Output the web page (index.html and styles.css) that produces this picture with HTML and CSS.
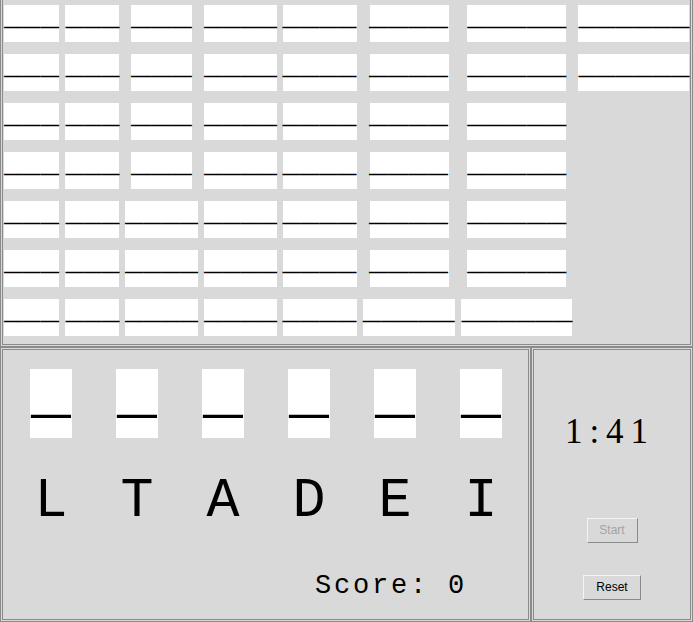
FILE: index.html
```html
<!DOCTYPE html>
<html>
<head>
<meta charset="utf-8">
<title>Word Game</title>
<link rel="stylesheet" href="styles.css">
</head>
<body>
<div class="board">
  <div class="col">
    <div class="box w55"><span>___</span></div><div class="box w55"><span>___</span></div><div class="box w55"><span>___</span></div><div class="box w55"><span>___</span></div><div class="box w55"><span>___</span></div><div class="box w55"><span>___</span></div><div class="box w55"><span>___</span></div>
  </div>
  <div class="col">
    <div class="box w54"><span>___</span></div><div class="box w54"><span>___</span></div><div class="box w54"><span>___</span></div><div class="box w54"><span>___</span></div><div class="box w54"><span>___</span></div><div class="box w54"><span>___</span></div><div class="box w54"><span>___</span></div>
  </div>
  <div class="col">
    <div class="box w61"><span>___</span></div><div class="box w61"><span>___</span></div><div class="box w61"><span>___</span></div><div class="box w61"><span>___</span></div><div class="box w73"><span>____</span></div><div class="box w73"><span>____</span></div><div class="box w73"><span>____</span></div>
  </div>
  <div class="col">
    <div class="box w73"><span>____</span></div><div class="box w73"><span>____</span></div><div class="box w73"><span>____</span></div><div class="box w73"><span>____</span></div><div class="box w73"><span>____</span></div><div class="box w73"><span>____</span></div><div class="box w73"><span>____</span></div>
  </div>
  <div class="col">
    <div class="box w74"><span>____</span></div><div class="box w74"><span>____</span></div><div class="box w74"><span>____</span></div><div class="box w74"><span>____</span></div><div class="box w74"><span>____</span></div><div class="box w74"><span>____</span></div><div class="box w74"><span>____</span></div>
  </div>
  <div class="col">
    <div class="box w79"><span>____</span></div><div class="box w79"><span>____</span></div><div class="box w79"><span>____</span></div><div class="box w79"><span>____</span></div><div class="box w79"><span>____</span></div><div class="box w79"><span>____</span></div><div class="box w92"><span>_____</span></div>
  </div>
  <div class="col">
    <div class="box w99"><span>_____</span></div><div class="box w99"><span>_____</span></div><div class="box w99"><span>_____</span></div><div class="box w99"><span>_____</span></div><div class="box w99"><span>_____</span></div><div class="box w99"><span>_____</span></div><div class="box w111"><span>______</span></div>
  </div>
  <div class="col">
    <div class="box w111"><span>______</span></div><div class="box w111"><span>______</span></div>
  </div>
</div>
<div class="bottom">
  <div class="play">
    <div class="slots">
      <div class="slot">_</div><div class="slot">_</div><div class="slot">_</div><div class="slot">_</div><div class="slot">_</div><div class="slot">_</div>
    </div>
    <div class="letters">
      <div class="letter">L</div><div class="letter">T</div><div class="letter">A</div><div class="letter">D</div><div class="letter">E</div><div class="letter">I</div>
    </div>
    <div class="score">Score: 0</div>
  </div>
  <div class="side">
    <div class="timer">1:41</div>
    <button class="btn start" disabled>Start</button>
    <button class="btn reset">Reset</button>
  </div>
</div>
</body>
</html>
```
FILE: styles.css
```css
* { box-sizing: border-box; }
html, body { margin: 0; padding: 0; }
body {
  background: #d9d9d9;
  width: 693px;
  height: 622px;
  overflow: hidden;
  font-family: "Liberation Sans", Arial, sans-serif;
}
.board {
  display: flex;
  align-items: flex-start;
  gap: 6px;
  height: 347px;
  padding: 5px 0 0 1px;
  border: 3px double #8a8a8a;
  border-top: 0;
}
.col {
  display: flex;
  flex-direction: column;
  align-items: center;
  gap: 12px;
}
.box {
  height: 37px;
  background: #fff;
  display: flex;
  justify-content: center;
  white-space: nowrap;
  font-family: "Liberation Mono", monospace;
  font-size: 30.5px;
  line-height: 24.5px;
  color: #000;
}
.box span { display: inline-block; }
.w54 { width: 54px; }
.w54 span { transform: scaleX(0.984); }
.w55 { width: 55px; }
.w61 { width: 61px; }
.w61 span { transform: scaleX(1.111); }
.w73 { width: 73px; }
.w74 { width: 74px; }
.w74 span { transform: scaleX(1.011); }
.w79 { width: 79px; }
.w79 span { transform: scaleX(1.079); }
.w92 { width: 92px; }
.w92 span { transform: scaleX(1.005); }
.w99 { width: 99px; }
.w99 span { transform: scaleX(1.082); }
.w111 { width: 111px; }
.w111 span { transform: scaleX(1.011); }

.bottom {
  display: flex;
  height: 275px;
}
.play {
  width: 531px;
  border: 3px double #8a8a8a;
  padding: 19px 0 0 27px;
}
.slots, .letters {
  display: grid;
  grid-template-columns: repeat(6, 42px);
  column-gap: 44px;
}
.slot {
  height: 69px;
  background: #fff;
  display: flex;
  justify-content: center;
  font-family: "Liberation Mono", monospace;
  font-size: 66.5px;
  line-height: 49px;
  color: #000;
}
.letters { margin-top: 34px; }
.letter {
  justify-self: center;
  font-family: "Liberation Mono", monospace;
  font-size: 55px;
  line-height: 60px;
  color: #000;
}
.score {
  margin-top: 39px;
  padding-left: 285px;
  font-family: "Liberation Mono", monospace;
  font-size: 27px;
  line-height: 30px;
  letter-spacing: 2.8px;
  color: #000;
}
.side {
  width: 162px;
  border: 3px double #8a8a8a;
  display: flex;
  flex-direction: column;
  align-items: center;
  padding-top: 62px;
}
.timer {
  font-family: "Liberation Serif", "Times New Roman", serif;
  font-size: 35px;
  line-height: 40px;
  letter-spacing: 7px;
  padding-right: 4px;
  color: #000;
}
.btn {
  height: 25px;
  padding: 0;
  background: #d9d9d9;
  border: 1px solid;
  border-color: #f4f4f4 #8a8a8a #8a8a8a #f4f4f4;
  font-family: "Liberation Sans", Arial, sans-serif;
  font-size: 12px;
  line-height: 21px;
  color: #000;
}
.start {
  width: 51px;
  margin-top: 66px;
  color: #a3a3a3;
}
.reset {
  width: 58px;
  margin-top: 32px;
}
```
